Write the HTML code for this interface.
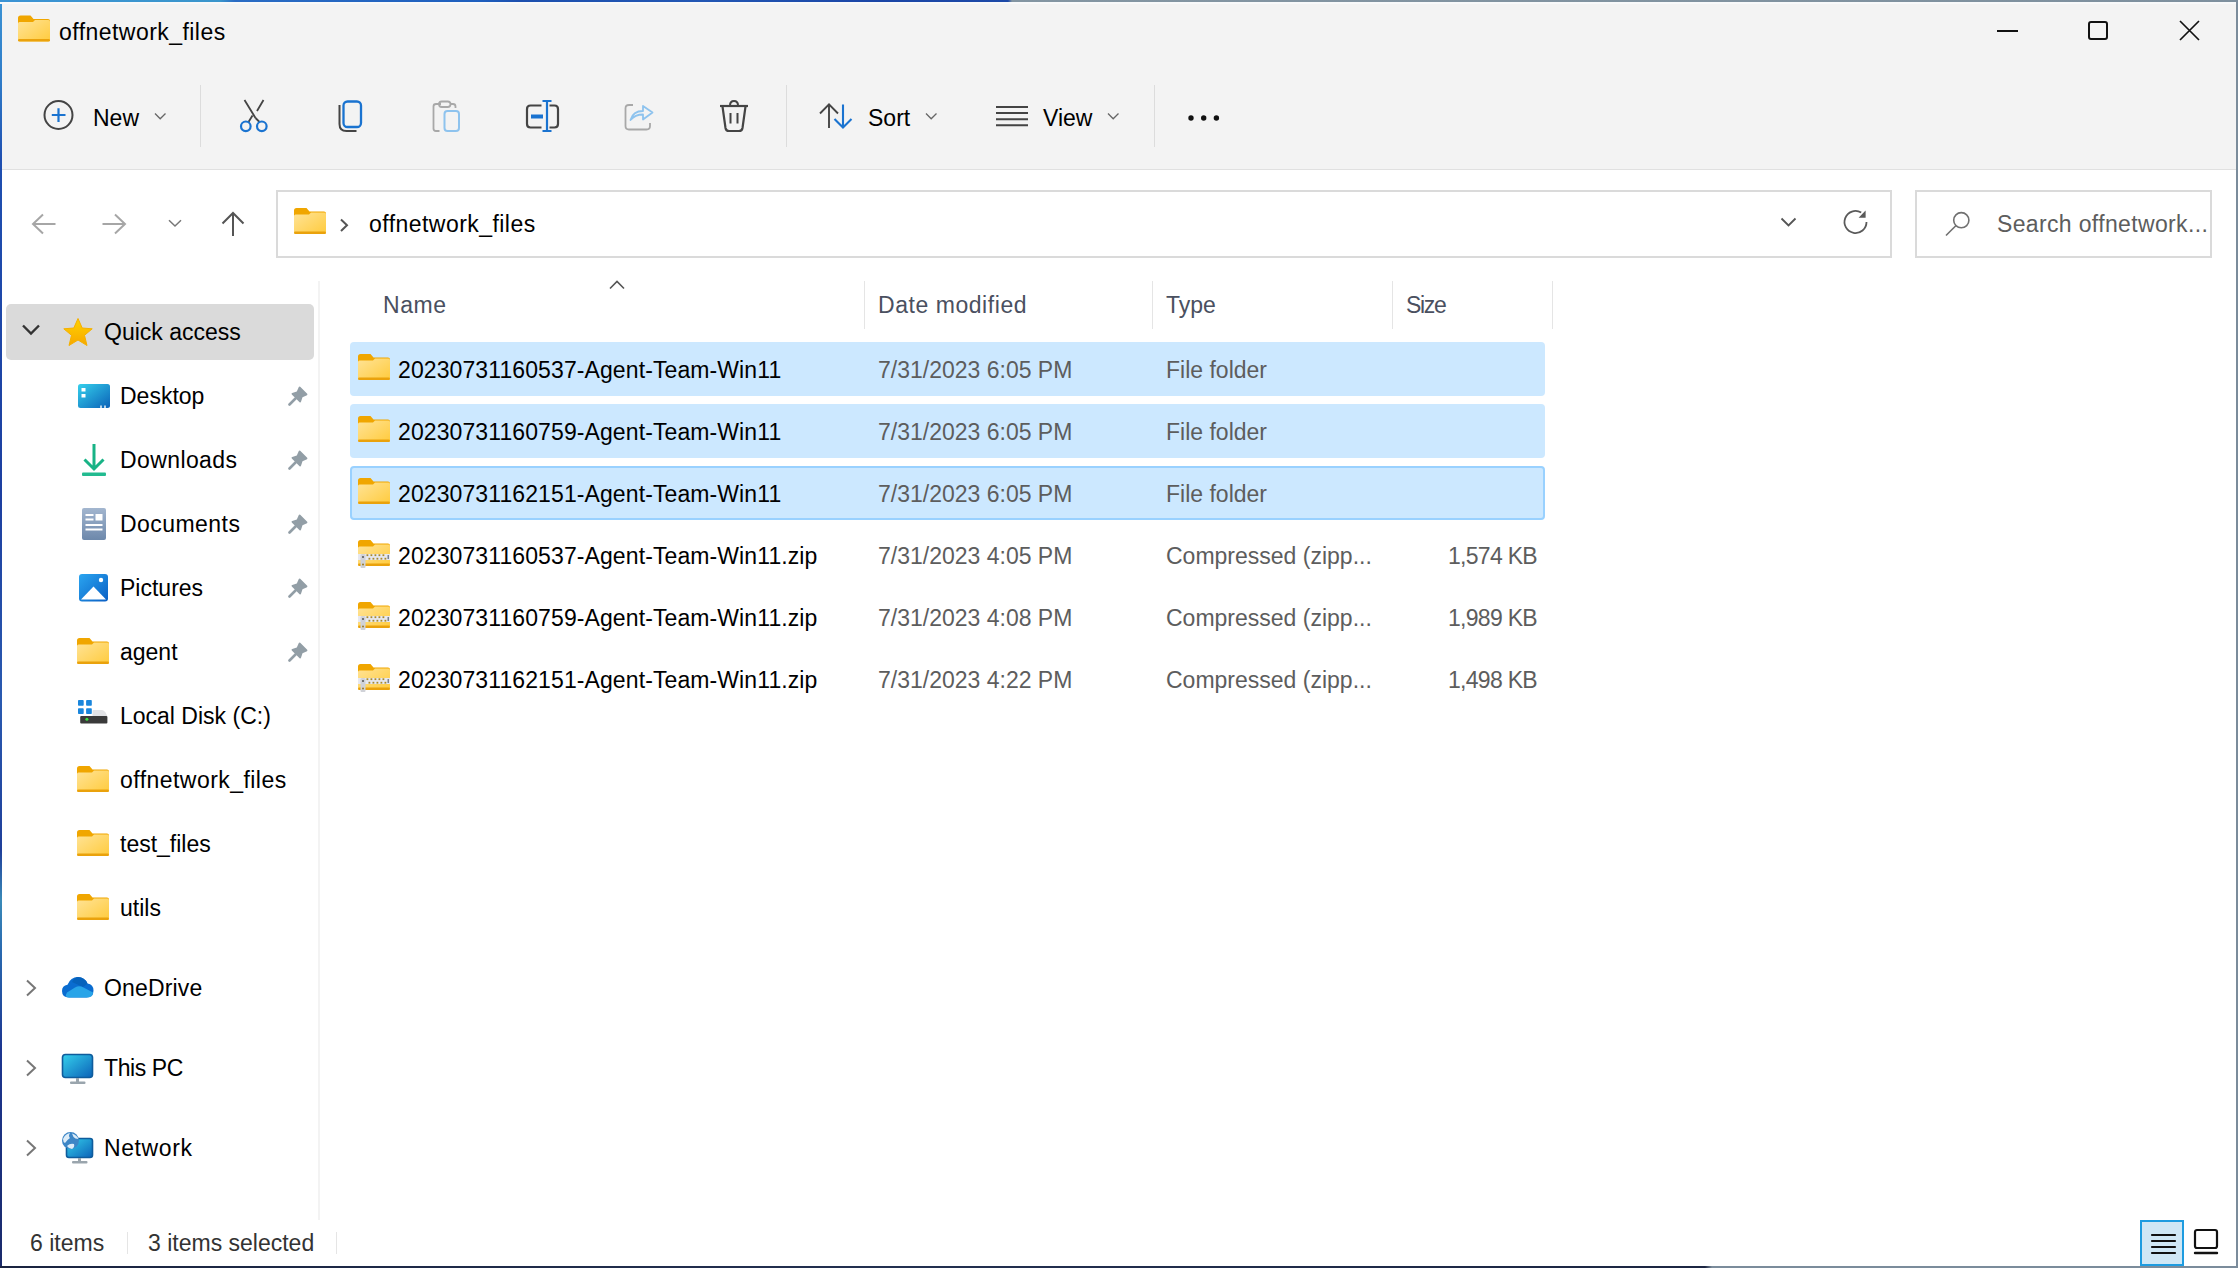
<!DOCTYPE html>
<html><head><meta charset="utf-8">
<style>
*{margin:0;padding:0;box-sizing:border-box}
html,body{width:2238px;height:1268px;overflow:hidden;background:#fff}
body{position:relative;font-family:"Liberation Sans",sans-serif;color:#000}
.a{position:absolute}
.t{position:absolute;white-space:nowrap;line-height:23px;font-size:23px}
svg.i{position:absolute;overflow:visible}
</style></head><body>
<svg width="0" height="0" style="position:absolute">
<defs>
<linearGradient id="fb" x1="0" y1="0" x2="1" y2="1">
<stop offset="0" stop-color="#ffe396"/><stop offset="1" stop-color="#ffcb3d"/>
</linearGradient>
<symbol id="folder" viewBox="0 0 32 26">
<path d="M0 2.5Q0 0 2.5 0H12.5L15.5 3.5H30Q32 3.5 32 5.5V9H0Z" fill="#f0a600"/>
<path d="M0 8Q0 6.5 1.5 6.5H15L17 4.5H30.5Q32 4.5 32 6V24Q32 26 30 26H2Q0 26 0 24Z" fill="url(#fb)"/>
<rect x="0" y="23.5" width="32" height="2.5" rx="1.2" fill="#eaa20c"/>
</symbol>

<symbol id="zip" viewBox="0 0 32 28">
<path d="M0 2.5Q0 0 2.5 0H12.5L15.5 3.5H30Q32 3.5 32 5.5V9H0Z" fill="#f0a600"/>
<path d="M0 8Q0 6.5 1.5 6.5H15L17 4.5H30.5Q32 4.5 32 6V24Q32 26 30 26H2Q0 26 0 24Z" fill="url(#fb)"/>
<rect x="0" y="23.5" width="32" height="2.5" rx="1.2" fill="#eaa20c"/>
<rect x="0" y="14" width="32" height="6" fill="#e6e8f0"/>
<g fill="#a8892a"><rect x="8.5" y="14.3" width="1.8" height="1.8"/><rect x="12.5" y="14.3" width="1.8" height="1.8"/><rect x="16.5" y="14.3" width="1.8" height="1.8"/><rect x="20.5" y="14.3" width="1.8" height="1.8"/><rect x="24.5" y="14.3" width="1.8" height="1.8"/>
<rect x="10.5" y="17.8" width="1.8" height="1.8"/><rect x="14.5" y="17.8" width="1.8" height="1.8"/><rect x="18.5" y="17.8" width="1.8" height="1.8"/><rect x="22.5" y="17.8" width="1.8" height="1.8"/><rect x="26.5" y="17.8" width="1.8" height="1.8"/></g>
<rect x="29.5" y="15" width="1.5" height="4" fill="#7a8290"/>
<path d="M2.5 15.5Q2.5 14 4 14H6Q7.5 14 7.5 15.5V27Q7.5 28 6.5 28H3.5Q2.5 28 2.5 27Z" fill="#d0d2d8"/>
<circle cx="5" cy="17" r="1" fill="#555"/><circle cx="5" cy="24.5" r="1" fill="#9a7a20"/>
</symbol>
<linearGradient id="blu" x1="0" y1="0" x2="1" y2="1"><stop offset="0" stop-color="#35d0ec"/><stop offset="1" stop-color="#0b62b8"/></linearGradient>
<linearGradient id="doc" x1="0" y1="0" x2="0" y2="1"><stop offset="0" stop-color="#a3b6cf"/><stop offset="1" stop-color="#6d88ab"/></linearGradient>
<linearGradient id="pic" x1="0" y1="0" x2="1" y2="1"><stop offset="0" stop-color="#2aa5f0"/><stop offset="1" stop-color="#0a5fc4"/></linearGradient>
<linearGradient id="star" x1="0" y1="0" x2="0" y2="1"><stop offset="0" stop-color="#ffd200"/><stop offset="1" stop-color="#f7a800"/></linearGradient>
<symbol id="pin" viewBox="0 0 20 20">
<path d="M12.2 0.8L19.2 7.8Q19.8 8.6 19 9.2L14.5 11.2L13 15.8Q12.5 17 11.6 16.2L3.8 8.4Q3 7.5 4.2 7L8.8 5.5L10.8 1Q11.4 0.2 12.2 0.8Z" fill="#929ea6"/>
<path d="M7.5 12.5L1.5 18.5" stroke="#929ea6" stroke-width="2.6" stroke-linecap="round"/>
</symbol>
</defs>
</svg>

<!-- window frame -->
<div class="a" style="left:0;top:0;width:2238px;height:170px;background:#f3f3f3"></div>
<div class="a" style="left:0;top:169px;width:2238px;height:1px;background:#e0e0e0"></div>
<div class="a" style="left:0;top:0;width:2238px;height:2px;background:linear-gradient(90deg,#3b93d4 0px,#3a96cc 220px,#2a6cc4 235px,#1e5fbe 480px,#1c4fae 520px,#2257b4 700px,#1a45a6 880px,#1d4aa8 1008px,#8395a2 1012px,#7e909e 2238px)"></div>
<div class="a" style="left:0;top:0;width:2px;height:1268px;background:linear-gradient(180deg,#3b93d4 0px,#2f7cc8 80px,#1f4fb0 160px,#1d3fa0 500px,#2a5ab0 700px,#1f3f9a 850px,#3a8ab8 900px,#2a6ab0 950px,#1c3690 1050px,#1a2a6a 1268px)"></div>
<div class="a" style="left:0;top:2px;width:2238px;height:2px;background:#f8f9fa"></div>
<div class="a" style="left:2236px;top:0;width:2px;height:1268px;background:#7b8c9b"></div>
<div class="a" style="left:0;top:1266px;width:2238px;height:2px;background:linear-gradient(90deg,#1a2440 0px,#233050 900px,#1c2642 1705px,#7b8c9b 1712px,#7b8c9b 2238px)"></div>

<!-- title -->
<svg class="i" style="left:18px;top:15px" width="32" height="27"><use href="#folder" width="32" height="27"/></svg>
<div class="t" style="left:59px;top:21px;letter-spacing:0.45px">offnetwork_files</div>


<!-- caption buttons -->
<div class="a" style="left:1997px;top:30px;width:21px;height:2px;background:#111"></div>
<div class="a" style="left:2088px;top:21px;width:20px;height:19px;border:2px solid #111;border-radius:3px"></div>
<svg class="i" style="left:2179px;top:20px" width="21" height="21"><path d="M1 1L20 20M20 1L1 20" stroke="#111" stroke-width="1.7" fill="none"/></svg>

<!-- toolbar -->
<svg class="i" style="left:43px;top:100px" width="31" height="31"><circle cx="15.5" cy="15" r="14" stroke="#444" stroke-width="2" fill="none"/><path d="M15.5 8.3V22M8.8 15H22.5" stroke="#1a73d0" stroke-width="2.2" fill="none"/></svg>
<div class="t" style="left:93px;top:107px">New</div>
<svg class="i" style="left:154px;top:112px" width="13" height="9"><path d="M1 1.5L6.2 6.8L11.5 1.5" stroke="#666" stroke-width="1.3" fill="none"/></svg>
<div class="a" style="left:200px;top:85px;width:1px;height:62px;background:#dcdcdc"></div>

<!-- cut -->
<svg class="i" style="left:238px;top:98px" width="32" height="36"><path d="M6.5 2L17.5 20M25.5 2L19 13M14.5 17.5L10.5 24" stroke="#444" stroke-width="1.8" fill="none"/><path d="M17.5 20L21.5 24" stroke="#444" stroke-width="1.8"/><circle cx="7.8" cy="28.3" r="4.8" stroke="#1a73d0" stroke-width="2.2" fill="none"/><circle cx="23.8" cy="28.3" r="4.8" stroke="#1a73d0" stroke-width="2.2" fill="none"/></svg>
<!-- copy -->
<svg class="i" style="left:336px;top:98px" width="30" height="36"><path d="M3.5 7V26Q3.5 33 10.5 33H20.5" stroke="#444" stroke-width="2" fill="none"/><rect x="7.5" y="3.5" width="17.5" height="25.5" rx="4" stroke="#1a73d0" stroke-width="2.3" fill="none"/></svg>
<!-- paste (disabled) -->
<svg class="i" style="left:430px;top:98px" width="34" height="36"><path d="M11 6H6Q3.5 6 3.5 8.5V30.5Q3.5 33 6 33H9.5M20.5 6H23Q25.5 6 25.5 8.5V10" stroke="#a8a8a8" stroke-width="1.8" fill="none"/><rect x="9" y="3.5" width="11.5" height="5.5" rx="2.7" stroke="#a8a8a8" stroke-width="1.8" fill="none"/><rect x="14.5" y="13" width="14.5" height="20" rx="3" stroke="#8ec3ee" stroke-width="2" fill="none"/></svg>
<!-- rename -->
<svg class="i" style="left:524px;top:98px" width="38" height="36"><path d="M17.5 7.5H6.5Q3 7.5 3 11V26Q3 29.5 6.5 29.5H17.5M25.5 7.5H30.5Q34 7.5 34 11V26Q34 29.5 30.5 29.5H25.5" stroke="#444" stroke-width="2.2" fill="none"/><path d="M7 18.5H19" stroke="#1a73d0" stroke-width="4" fill="none"/><path d="M23 3V33M18.5 3H27.5M18.5 33H27.5" stroke="#1a73d0" stroke-width="2.2" fill="none"/></svg>
<!-- share (disabled) -->
<svg class="i" style="left:622px;top:98px" width="34" height="36"><path d="M11 7H7Q3.5 7 3.5 10.5V28Q3.5 31.5 7 31.5H24.5Q28 31.5 28 28V25" stroke="#a8a8a8" stroke-width="1.8" fill="none"/><path d="M8.5 22Q11 13 21 13V8L30.5 14.5L21 21.5V16.5Q13 16.5 8.5 22Z" stroke="#8ec3ee" stroke-width="1.8" fill="none" stroke-linejoin="round"/></svg>
<!-- delete -->
<svg class="i" style="left:717px;top:98px" width="34" height="36"><path d="M3 8H31" stroke="#444" stroke-width="2.2"/><path d="M13 7.5Q13 3 17 3Q21 3 21 7.5" stroke="#444" stroke-width="2" fill="none"/><path d="M5.5 8.5L8.5 30Q9 33 12 33H22Q25 33 25.5 30L28.5 8.5" stroke="#444" stroke-width="2.2" fill="none"/><path d="M13.5 15V25.5M20.5 15V25.5" stroke="#444" stroke-width="2" fill="none"/></svg>
<div class="a" style="left:786px;top:85px;width:1px;height:62px;background:#dcdcdc"></div>

<!-- sort -->
<svg class="i" style="left:817px;top:102px" width="38" height="28"><path d="M12 2V26M3 11.5L12 2.3L21 11.5" stroke="#444" stroke-width="1.9" fill="none"/><path d="M26 2.5V25.5M17.5 17L26 25.5L34.5 17" stroke="#1a73d0" stroke-width="2.1" fill="none"/></svg>
<div class="t" style="left:868px;top:107px">Sort</div>
<svg class="i" style="left:925px;top:112px" width="13" height="9"><path d="M1 1.5L6.2 6.8L11.5 1.5" stroke="#666" stroke-width="1.3" fill="none"/></svg>

<!-- view -->
<svg class="i" style="left:995px;top:104px" width="34" height="24"><path d="M1 3H33M1 9H33M1 15.2H33M1 21.3H33" stroke="#444" stroke-width="2" fill="none"/></svg>
<div class="t" style="left:1043px;top:107px">View</div>
<svg class="i" style="left:1107px;top:112px" width="13" height="9"><path d="M1 1.5L6.2 6.8L11.5 1.5" stroke="#666" stroke-width="1.3" fill="none"/></svg>
<div class="a" style="left:1154px;top:85px;width:1px;height:62px;background:#dcdcdc"></div>
<svg class="i" style="left:1185px;top:112px" width="38" height="12"><circle cx="6" cy="6" r="2.7" fill="#111"/><circle cx="18.7" cy="6" r="2.7" fill="#111"/><circle cx="31.4" cy="6" r="2.7" fill="#111"/></svg>

<!-- nav -->
<svg class="i" style="left:30px;top:212px" width="28" height="24"><path d="M2.5 12H25.5M13 2.5L3 12L13 21.5" stroke="#a6a6a6" stroke-width="2" fill="none"/></svg>
<svg class="i" style="left:100px;top:212px" width="28" height="24"><path d="M2.5 12H25.5M15 2.5L25 12L15 21.5" stroke="#a6a6a6" stroke-width="2" fill="none"/></svg>
<svg class="i" style="left:167px;top:218px" width="16" height="10"><path d="M2 2.2L8 8L14 2.2" stroke="#777" stroke-width="1.5" fill="none"/></svg>
<svg class="i" style="left:220px;top:210px" width="26" height="28"><path d="M13 3V26M2.5 13.5L13 3L23.5 13.5" stroke="#555" stroke-width="2" fill="none"/></svg>

<!-- address -->
<div class="a" style="left:276px;top:190px;width:1616px;height:68px;border:2px solid #dadada;background:#fff"></div>
<svg class="i" style="left:294px;top:208px" width="32" height="26"><use href="#folder" width="32" height="26"/></svg>
<svg class="i" style="left:338px;top:217px" width="12" height="16"><path d="M3 2.5L9 8.2L3 14" stroke="#555" stroke-width="2" fill="none"/></svg>
<div class="t" style="left:369px;top:213px;letter-spacing:0.45px">offnetwork_files</div>
<svg class="i" style="left:1779px;top:216px" width="20" height="12"><path d="M2.5 2.5L9.5 9.5L16.5 2.5" stroke="#555" stroke-width="1.8" fill="none"/></svg>
<svg class="i" style="left:1840px;top:206px" width="30" height="30"><path d="M26.5 16A11 11 0 1 1 21.2 6.6" stroke="#5a5a5a" stroke-width="1.8" fill="none"/><path d="M25.6 4.6L25.6 11.8L18.6 11.8Z" fill="#5a5a5a"/></svg>

<!-- search -->
<div class="a" style="left:1915px;top:190px;width:297px;height:68px;border:2px solid #dadada;background:#fff"></div>
<svg class="i" style="left:1942px;top:208px" width="30" height="32"><circle cx="19.3" cy="12.2" r="7.6" stroke="#707070" stroke-width="1.6" fill="none"/><path d="M13.8 17.7L4 27.5" stroke="#707070" stroke-width="1.6"/></svg>
<div class="t" style="left:1997px;top:213px;color:#5d5d5d;letter-spacing:0.35px">Search offnetwork...</div>


<!-- sidebar -->
<div class="a" style="left:318px;top:281px;width:2px;height:939px;background:#f3f3f3"></div>
<div class="a" style="left:6px;top:304px;width:308px;height:56px;background:#dadada;border-radius:5px"></div>
<svg class="i" style="left:20px;top:322px" width="22" height="16"><path d="M3 3.5L11 11.5L19 3.5" stroke="#333" stroke-width="2.4" fill="none"/></svg>
<svg class="i" style="left:62px;top:317px" width="32" height="31"><path d="M16 1.5L20.2 11L30.2 11.8L22.5 18.3L25 28.5L16 23L7 28.5L9.5 18.3L1.8 11.8L11.8 11Z" fill="url(#star)" stroke="#f5b000" stroke-width="1" stroke-linejoin="round"/></svg>
<div class="t" style="left:104px;top:321px">Quick access</div>

<svg class="i" style="left:78px;top:384px" width="32" height="25"><rect x="0" y="0" width="32" height="24" rx="2.5" fill="url(#blu)"/><rect x="3.5" y="4" width="4" height="3.5" fill="#fff"/><rect x="3.5" y="10" width="4" height="3.5" fill="#fff"/><rect x="22" y="21.5" width="2" height="2.5" fill="#fff" opacity=".7"/><rect x="26" y="21.5" width="2" height="2.5" fill="#fff" opacity=".7"/></svg>
<div class="t" style="left:120px;top:385px">Desktop</div>
<svg class="i" style="left:288px;top:386px" width="20" height="20"><use href="#pin" width="20" height="20"/></svg>

<svg class="i" style="left:80px;top:443px" width="28" height="34"><path d="M14 1V26M4.5 16.5L14 26L23.5 16.5" stroke="#18b386" stroke-width="3" fill="none"/><rect x="2" y="29.5" width="24" height="3.5" rx="1" fill="#22bb90"/></svg>
<div class="t" style="left:120px;top:449px;letter-spacing:0.4px">Downloads</div>
<svg class="i" style="left:288px;top:450px" width="20" height="20"><use href="#pin" width="20" height="20"/></svg>

<svg class="i" style="left:82px;top:508px" width="24" height="32"><rect x="0" y="0" width="24" height="32" rx="2" fill="url(#doc)"/><rect x="3.5" y="6" width="8" height="2" fill="#fff"/><rect x="3.5" y="10.5" width="8" height="2" fill="#fff"/><rect x="13.5" y="6" width="7" height="6.5" fill="#fff"/><rect x="3.5" y="16" width="17" height="2" fill="#fff"/><rect x="3.5" y="20.5" width="17" height="2" fill="#fff"/></svg>
<div class="t" style="left:120px;top:513px;letter-spacing:0.45px">Documents</div>
<svg class="i" style="left:288px;top:514px" width="20" height="20"><use href="#pin" width="20" height="20"/></svg>

<svg class="i" style="left:79px;top:574px" width="30" height="28"><rect x="0" y="0" width="29" height="27.5" rx="3" fill="url(#pic)"/><path d="M2 25.5L14.5 12.5L27 25.5Z" fill="#fff"/><circle cx="22" cy="6" r="2.2" fill="#fff"/></svg>
<div class="t" style="left:120px;top:577px">Pictures</div>
<svg class="i" style="left:288px;top:578px" width="20" height="20"><use href="#pin" width="20" height="20"/></svg>

<svg class="i" style="left:77px;top:638px" width="32" height="26"><use href="#folder" width="32" height="26"/></svg>
<div class="t" style="left:120px;top:641px">agent</div>
<svg class="i" style="left:288px;top:642px" width="20" height="20"><use href="#pin" width="20" height="20"/></svg>

<svg class="i" style="left:77px;top:699px" width="32" height="26"><g fill="#1a86dc"><rect x="1" y="1.1" width="5.7" height="5.7" rx="0.8"/><rect x="9.1" y="1.1" width="5.7" height="5.7" rx="0.8"/><rect x="1" y="9.3" width="5.7" height="5.7" rx="0.8"/><rect x="9.1" y="9.3" width="5.7" height="5.7" rx="0.8"/></g><path d="M15.5 17.2V12Q15.5 11 16.5 11H25Q27 11 28.5 13.5L30.4 17.2Z" fill="#e2e3e6"/><rect x="3.2" y="17" width="27.2" height="7.4" rx="1" fill="#3a3a3a"/><circle cx="9.9" cy="20.2" r="1.5" fill="#3ce040"/></svg>
<div class="t" style="left:120px;top:705px">Local Disk (C:)</div>

<svg class="i" style="left:77px;top:766px" width="32" height="26"><use href="#folder" width="32" height="26"/></svg>
<div class="t" style="left:120px;top:769px;letter-spacing:0.45px">offnetwork_files</div>
<svg class="i" style="left:77px;top:830px" width="32" height="26"><use href="#folder" width="32" height="26"/></svg>
<div class="t" style="left:120px;top:833px">test_files</div>
<svg class="i" style="left:77px;top:894px" width="32" height="26"><use href="#folder" width="32" height="26"/></svg>
<div class="t" style="left:120px;top:897px">utils</div>

<svg class="i" style="left:24px;top:978px" width="14" height="20"><path d="M3 2.5L11 10L3 17.5" stroke="#777" stroke-width="2" fill="none"/></svg>
<svg class="i" style="left:61px;top:976px" width="33" height="22"><path d="M8 21.5Q1 21.5 1 15Q1 9.5 6.5 8.8Q9.5 1 17 1Q23.5 1 26.5 7.5Q32.5 8.5 32.5 14.5Q32.5 21.5 25.5 21.5Z" fill="#0a6cd0"/><path d="M11 6Q14 1 17 1Q23.5 1 26.5 7.5L22 11Z" fill="#0662bc"/><path d="M8 21.5Q3 21.5 6 16.5L14 11.5Q18 9 22.5 11.5L32 16.5Q32 21.5 25.5 21.5Z" fill="#28a4e8"/></svg>
<div class="t" style="left:104px;top:977px;letter-spacing:0.15px">OneDrive</div>

<svg class="i" style="left:24px;top:1058px" width="14" height="20"><path d="M3 2.5L11 10L3 17.5" stroke="#777" stroke-width="2" fill="none"/></svg>
<svg class="i" style="left:61px;top:1053px" width="33" height="32"><rect x="1.5" y="1.5" width="30" height="23" rx="3" fill="url(#blu)" stroke="#0f5c9c" stroke-width="1.6"/><rect x="15" y="25" width="3" height="4" fill="#9aa5ad"/><rect x="9" y="28.5" width="15.5" height="2.5" rx="1" fill="#9aa5ad"/></svg>
<div class="t" style="left:104px;top:1057px;letter-spacing:-0.4px">This PC</div>

<svg class="i" style="left:24px;top:1138px" width="14" height="20"><path d="M3 2.5L11 10L3 17.5" stroke="#777" stroke-width="2" fill="none"/></svg>
<svg class="i" style="left:61px;top:1131px" width="33" height="33"><rect x="5.5" y="7.5" width="26" height="19" rx="2.5" fill="url(#blu)" stroke="#0f5c9c" stroke-width="1.6"/><rect x="17" y="27" width="3" height="3.5" fill="#9aa5ad"/><rect x="11" y="30" width="15.5" height="2.5" rx="1" fill="#9aa5ad"/><circle cx="9.5" cy="9.5" r="8.5" fill="#3d86c6"/><path d="M2 8Q4 3 9 2Q7 5 9 7Q6 9 4 12Q2 11 2 8Z M11 2.5Q16 4 17.5 8Q14 8 12.5 6Z M6 15Q9 12 13 13Q14 16 11 18Q8 18 6 15Z" fill="#dcecf8"/></svg>
<div class="t" style="left:104px;top:1137px;letter-spacing:0.6px">Network</div>

<!-- status bar -->
<div class="t" style="left:30px;top:1232px;color:#333">6 items</div>
<div class="a" style="left:127px;top:1232px;width:1px;height:22px;background:#e5e5e5"></div>
<div class="t" style="left:148px;top:1232px;color:#333">3 items selected</div>
<div class="a" style="left:336px;top:1232px;width:1px;height:22px;background:#e5e5e5"></div>
<div class="a" style="left:2140px;top:1220px;width:44px;height:46px;border:2px solid #1e9ce0;background:#cfe7f5"></div>
<svg class="i" style="left:2150px;top:1232px" width="26" height="24"><path d="M2 3H25M2 9H25M2 15H25M2 21H25" stroke="#111" stroke-width="2.2" stroke-linecap="round"/></svg>
<svg class="i" style="left:2192px;top:1228px" width="28" height="28"><rect x="3" y="2" width="22" height="18" rx="2" stroke="#111" stroke-width="2.2" fill="none"/><path d="M3 25H25" stroke="#111" stroke-width="2.4" stroke-linecap="round"/></svg>

<!-- header -->
<div class="t" style="left:383px;top:294px;color:#4a5060;letter-spacing:0.6px">Name</div>
<svg class="i" style="left:608px;top:278px" width="18" height="13"><path d="M2 10.5L9 3.5L16 10.5" stroke="#555" stroke-width="1.6" fill="none"/></svg>
<div class="a" style="left:864px;top:281px;width:1px;height:48px;background:#e5e5e5"></div>
<div class="t" style="left:878px;top:294px;color:#4a5060;letter-spacing:0.55px">Date modified</div>
<div class="a" style="left:1152px;top:281px;width:1px;height:48px;background:#e5e5e5"></div>
<div class="t" style="left:1166px;top:294px;color:#4a5060">Type</div>
<div class="a" style="left:1392px;top:281px;width:1px;height:48px;background:#e5e5e5"></div>
<div class="t" style="left:1406px;top:294px;color:#4a5060;letter-spacing:-1.3px">Size</div>
<div class="a" style="left:1552px;top:281px;width:1px;height:48px;background:#e5e5e5"></div>

<!-- selections -->
<div class="a" style="left:350px;top:342px;width:1195px;height:54px;background:#cce8ff;border-radius:4px"></div>
<div class="a" style="left:350px;top:404px;width:1195px;height:54px;background:#cce8ff;border-radius:4px"></div>
<div class="a" style="left:350px;top:466px;width:1195px;height:54px;background:#cce8ff;border:2px solid #99d1ff;border-radius:4px"></div>
<svg class="i" style="left:358px;top:354px" width="32" height="26"><use href="#folder" width="32" height="26"/></svg>
<div class="t" style="left:398px;top:359px;letter-spacing:0.1px">20230731160537-Agent-Team-Win11</div>
<div class="t" style="left:878px;top:359px;color:#5d5d5d">7/31/2023 6:05 PM</div>
<div class="t" style="left:1166px;top:359px;color:#5d5d5d">File folder</div>
<svg class="i" style="left:358px;top:416px" width="32" height="26"><use href="#folder" width="32" height="26"/></svg>
<div class="t" style="left:398px;top:421px;letter-spacing:0.1px">20230731160759-Agent-Team-Win11</div>
<div class="t" style="left:878px;top:421px;color:#5d5d5d">7/31/2023 6:05 PM</div>
<div class="t" style="left:1166px;top:421px;color:#5d5d5d">File folder</div>
<svg class="i" style="left:358px;top:478px" width="32" height="26"><use href="#folder" width="32" height="26"/></svg>
<div class="t" style="left:398px;top:483px;letter-spacing:0.1px">20230731162151-Agent-Team-Win11</div>
<div class="t" style="left:878px;top:483px;color:#5d5d5d">7/31/2023 6:05 PM</div>
<div class="t" style="left:1166px;top:483px;color:#5d5d5d">File folder</div>
<svg class="i" style="left:358px;top:540px" width="32" height="28"><use href="#zip" width="32" height="28"/></svg>
<div class="t" style="left:398px;top:545px;letter-spacing:0.1px">20230731160537-Agent-Team-Win11.zip</div>
<div class="t" style="left:878px;top:545px;color:#5d5d5d">7/31/2023 4:05 PM</div>
<div class="t" style="left:1166px;top:545px;color:#5d5d5d">Compressed (zipp...</div>
<div class="t" style="right:701px;top:545px;color:#5d5d5d;letter-spacing:-0.7px">1,574 KB</div>
<svg class="i" style="left:358px;top:602px" width="32" height="28"><use href="#zip" width="32" height="28"/></svg>
<div class="t" style="left:398px;top:607px;letter-spacing:0.1px">20230731160759-Agent-Team-Win11.zip</div>
<div class="t" style="left:878px;top:607px;color:#5d5d5d">7/31/2023 4:08 PM</div>
<div class="t" style="left:1166px;top:607px;color:#5d5d5d">Compressed (zipp...</div>
<div class="t" style="right:701px;top:607px;color:#5d5d5d;letter-spacing:-0.7px">1,989 KB</div>
<svg class="i" style="left:358px;top:664px" width="32" height="28"><use href="#zip" width="32" height="28"/></svg>
<div class="t" style="left:398px;top:669px;letter-spacing:0.1px">20230731162151-Agent-Team-Win11.zip</div>
<div class="t" style="left:878px;top:669px;color:#5d5d5d">7/31/2023 4:22 PM</div>
<div class="t" style="left:1166px;top:669px;color:#5d5d5d">Compressed (zipp...</div>
<div class="t" style="right:701px;top:669px;color:#5d5d5d;letter-spacing:-0.7px">1,498 KB</div>

</body></html>
